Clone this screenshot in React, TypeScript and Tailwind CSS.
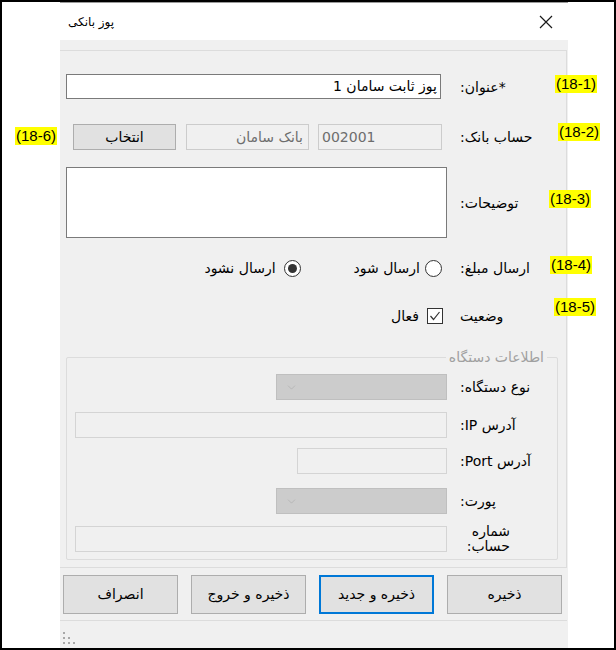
import { ChevronDown } from 'lucide-react'

const fa = "font-['DejaVu_Sans',sans-serif]"

function Tag({ text, className }: { text: string; className: string }) {
  return (
    <div
      className={`absolute h-[18px] bg-[#ffff00] px-[1px] font-['Liberation_Sans',sans-serif] text-[15px] leading-[18px] text-black ${className}`}
    >
      {text}
    </div>
  )
}

function Label({ children }: { children: React.ReactNode }) {
  return (
    <div dir="rtl" className={`ml-[13px] text-left text-[14px] leading-[16px] text-black ${fa}`}>
      {children}
    </div>
  )
}

function Combo({ w }: { w: string }) {
  return (
    <div className={`flex h-[26px] items-center border border-[#bfbfbf] bg-[#cccccc] pl-[8px] ${w}`}>
      <ChevronDown size={13} strokeWidth={1} className="text-[#a6a6a6]" />
    </div>
  )
}

function Btn({ text, focused }: { text: string; focused?: boolean }) {
  return (
    <div
      className={`flex h-[39px] w-[115px] items-center justify-center bg-[#e1e1e1] text-[14px] text-black ${fa} ${
        focused ? 'border-2 border-[#0078d7]' : 'border border-[#adadad]'
      }`}
    >
      {text}
    </div>
  )
}

export default function App() {
  return (
    <div className="relative h-[650px] w-[616px] overflow-hidden border-2 border-black bg-white">
      <div className="-mt-[1px] ml-[58px] flex h-[647px] w-[508px] flex-col">
        {/* title bar */}
        <div className="flex h-[39px] items-center justify-between border-t-2 border-[#9a9a9a] bg-white pl-[8px] pr-[15px]">
          <span className={`text-[12px] text-black ${fa}`}>پوز بانکی</span>
          <svg width="14" height="14" viewBox="0 0 14 14" className="text-[#1a1a1a]">
            <path d="M1 1 L13 13 M13 1 L1 13" stroke="currentColor" strokeWidth="1.2" />
          </svg>
        </div>

        <div className="flex flex-1 flex-col bg-[#f0f0f0] pt-[10px]">
          {/* panel */}
          <div className="mr-[1px] flex flex-col border-y border-r border-[#dcdcdc]">
            {/* title */}
            <div className="mt-[23px] flex h-[25px] items-center">
              <div className="flex w-[387px] justify-end">
                <div
                  dir="rtl"
                  className={`mr-[6px] flex h-[25px] w-[375px] items-center border border-[#7a7a7a] bg-white px-[3px] text-[14px] text-black ${fa}`}
                >
                  پوز ثابت سامان 1
                </div>
              </div>
              <Label>*عنوان:</Label>
            </div>

            {/* bank account */}
            <div className="mt-[25px] flex h-[26px] items-center">
              <div className="flex w-[387px] items-center justify-end">
                <div className={`flex h-[26px] w-[103px] items-center justify-center border border-[#adadad] bg-[#e1e1e1] text-[14px] text-black ${fa}`}>
                  انتخاب
                </div>
                <div
                  dir="rtl"
                  className={`ml-[10px] flex h-[26px] w-[123px] items-center border border-[#cccccc] bg-[#f0f0f0] px-[5px] text-[14px] text-[#6d6d6d] ${fa}`}
                >
                  بانک سامان
                </div>
                <div
                  className={`ml-[9px] mr-[5px] flex h-[26px] w-[124px] items-center border border-[#cccccc] bg-[#f0f0f0] px-[3px] text-[14px] text-[#6d6d6d] ${fa}`}
                >
                  002001
                </div>
              </div>
              <Label>حساب بانک:</Label>
            </div>

            {/* description */}
            <div className="mt-[17px] flex h-[71px] items-center">
              <div className="flex w-[387px] justify-end">
                <div className="h-[71px] w-[381px] border border-[#7a7a7a] bg-white" />
              </div>
              <Label>توضیحات:</Label>
            </div>

            {/* send amount */}
            <div className="mt-[20px] flex h-[20px] items-center">
              <div className={`flex w-[387px] items-center justify-end text-[14px] text-black ${fa}`}>
                <span>ارسال نشود</span>
                <div className="ml-[8px] flex h-[17px] w-[17px] items-center justify-center rounded-full border border-[#333333] bg-white">
                  <div className="h-[9px] w-[9px] rounded-full bg-[#333333]" />
                </div>
                <span className="ml-[53px]">ارسال شود</span>
                <div className="ml-[5px] mr-[5px] h-[17px] w-[17px] rounded-full border border-[#333333] bg-white" />
              </div>
              <Label>ارسال مبلغ:</Label>
            </div>

            {/* status */}
            <div className="mt-[28px] flex h-[20px] items-center">
              <div className={`flex w-[387px] items-center justify-end text-[14px] text-black ${fa}`}>
                <span>فعال</span>
                <div className="ml-[8px] mr-[4px] flex h-[16px] w-[16px] items-center justify-center border border-[#333333] bg-white">
                  <svg width="12" height="12" viewBox="0 0 12 12">
                    <path d="M1.5 6 L4.5 9.5 L10.5 2" fill="none" stroke="#333333" strokeWidth="1.2" />
                  </svg>
                </div>
              </div>
              <Label>وضعیت</Label>
            </div>

            {/* device info group */}
            <div className="relative mb-[7px] ml-[6px] mt-[31px] w-[492px] rounded-[2px] border border-[#dcdcdc] pb-[7px] pt-[16px]">
              <div className={`absolute -top-[9px] right-[10px] bg-[#f0f0f0] px-[3px] text-[14px] leading-[16px] text-[#a0a0a0] ${fa}`}>
                اطلاعات دستگاه
              </div>

              <div className="flex h-[26px] items-center">
                <div className="flex w-[380px] justify-end">
                  <Combo w="w-[171px]" />
                </div>
                <Label>نوع دستگاه:</Label>
              </div>

              <div className="mt-[12px] flex h-[26px] items-center">
                <div className="flex w-[380px] justify-end">
                  <div className="h-[26px] w-[372px] border border-[#d4d4d4] bg-[#f0f0f0]" />
                </div>
                <Label>آدرس IP:</Label>
              </div>

              <div className="mt-[10px] flex h-[26px] items-center">
                <div className="flex w-[380px] justify-end">
                  <div className="h-[26px] w-[150px] border border-[#d4d4d4] bg-[#f0f0f0]" />
                </div>
                <Label>آدرس Port:</Label>
              </div>

              <div className="mt-[14px] flex h-[26px] items-center">
                <div className="flex w-[380px] justify-end">
                  <Combo w="w-[171px]" />
                </div>
                <Label>پورت:</Label>
              </div>

              <div className="mt-[12px] flex h-[26px] items-center">
                <div className="flex w-[380px] justify-end">
                  <div className="h-[26px] w-[372px] border border-[#d4d4d4] bg-[#f0f0f0]" />
                </div>
                <Label>
                  <div className="w-[50px] text-right leading-[15px]">
                    شماره
                    <br />
                    حساب:
                  </div>
                </Label>
              </div>
            </div>
          </div>

          {/* buttons */}
          <div className="mt-[7px] flex gap-[13px] pl-[3px]">
            <Btn text="انصراف" />
            <Btn text="ذخیره و خروج" />
            <Btn text="ذخیره و جدید" focused />
            <Btn text="ذخیره" />
          </div>

          <div className="mr-[1px] mt-[6px] flex-1 border-t border-[#dcdcdc] pl-[2px] pt-[10px]">
            <svg width="14" height="13" viewBox="0 0 14 13">
              <g fill="#a8a8a8">
                <rect x="1" y="1" width="2" height="2" />
                <rect x="1" y="6" width="2" height="2" />
                <rect x="6" y="6" width="2" height="2" />
                <rect x="1" y="11" width="2" height="2" />
                <rect x="6" y="11" width="2" height="2" />
                <rect x="11" y="11" width="2" height="2" />
              </g>
            </svg>
          </div>
        </div>
      </div>

      <Tag text="(18-1)" className="left-[553px] top-[73px]" />
      <Tag text="(18-2)" className="left-[556px] top-[121px]" />
      <Tag text="(18-6)" className="left-[13px] top-[125px]" />
      <Tag text="(18-3)" className="left-[547px] top-[188px]" />
      <Tag text="(18-4)" className="left-[548px] top-[254px]" />
      <Tag text="(18-5)" className="left-[552px] top-[296px]" />
    </div>
  )
}
